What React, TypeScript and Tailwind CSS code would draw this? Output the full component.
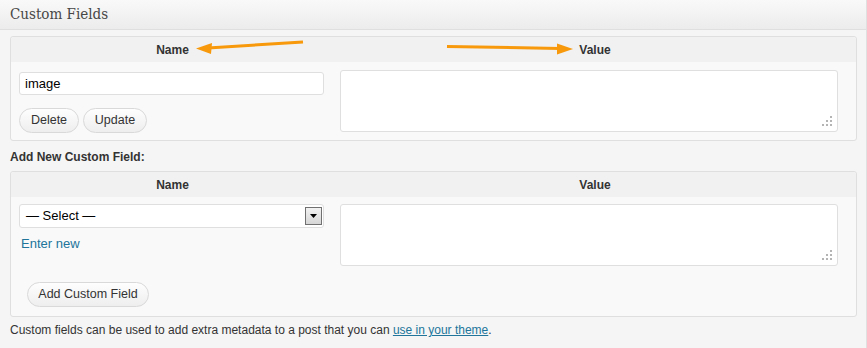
import React from "react";

function Grip() {
  return (
    <svg width="10" height="10" viewBox="0 0 10 10" className="absolute right-[5px] bottom-[5px]">
      <g fill="#b4b4b4">
        <rect x="8" y="0" width="2" height="2" />
        <rect x="4" y="4" width="2" height="2" />
        <rect x="8" y="4" width="2" height="2" />
        <rect x="0" y="8" width="2" height="2" />
        <rect x="4" y="8" width="2" height="2" />
        <rect x="8" y="8" width="2" height="2" />
      </g>
    </svg>
  );
}

function TextArea() {
  return (
    <div className="relative w-[498px] h-[62px] bg-white border border-[#dfdfdf] rounded-[3px]">
      <Grip />
    </div>
  );
}

function Btn({ children, className = "" }: { children: React.ReactNode; className?: string }) {
  return (
    <div
      className={
        "h-[25px] flex items-center justify-center rounded-full border border-[#d9d9d9] bg-gradient-to-b from-[#fefefe] to-[#eeeeee] text-[12.5px] text-[#333] " +
        className
      }
    >
      {children}
    </div>
  );
}

function Head() {
  return (
    <div className="grid grid-cols-[323px_1fr] h-[25px] bg-[#f1f1f1] items-center font-bold text-[12px] text-[#333] rounded-t-[3px]">
      <div className="text-center">Name</div>
      <div className="text-center">Value</div>
    </div>
  );
}

export default function App() {
  return (
    <div
      className="relative w-[867px] h-[348px] bg-[#f5f5f5] border-r border-[#e0e0e0] overflow-hidden"
      style={{ fontFamily: '"Liberation Sans", Arial, sans-serif' }}
    >
      <div className="h-[30px] flex items-center px-[10px] bg-gradient-to-b from-[#f9f9f9] to-[#ececec] border-b border-[#dfdfdf]">
        <span
          className="text-[15px] text-[#464646]"
          style={{ fontFamily: '"DejaVu Serif Condensed", "DejaVu Serif", Georgia, serif', fontSize: "15px" }}
        >
          Custom Fields
        </span>
      </div>

      <div className="px-[10px] pt-[6px]">
        {/* table 1 */}
        <div className="w-[847px] border border-[#dfdfdf] rounded-[3px] bg-[#f9f9f9]">
          <Head />
          <div className="grid grid-cols-[323px_1fr]">
            <div className="pl-[8px] pt-[10px] pb-[7px]">
              <div className="w-[305px] h-[23px] bg-white border border-[#dfdfdf] rounded-[3px] flex items-center px-[5px] text-[13px] text-black">
                image
              </div>
              <div className="flex gap-[4px] mt-[13px]">
                <Btn className="w-[60px]">Delete</Btn>
                <Btn className="w-[64px]">Update</Btn>
              </div>
            </div>
            <div className="pl-[6px] pt-[8px]">
              <TextArea />
            </div>
          </div>
        </div>

        <div className="mt-[9px] h-[14px] flex items-center font-bold text-[12px] text-[#333]">
          Add New Custom Field:
        </div>

        {/* table 2 */}
        <div className="mt-[7px] w-[847px] border border-[#dfdfdf] rounded-[3px] bg-[#f9f9f9]">
          <Head />
          <div className="grid grid-cols-[323px_1fr]">
            <div className="pl-[8px] pt-[7px] pb-[9px]">
              <div className="w-[305px] h-[24px] bg-white border border-[#dfdfdf] rounded-[3px] flex items-center justify-between pl-[6px] pr-[1px] text-[13px] text-black">
                <span>— Select —</span>
                <div className="w-[17px] h-[18px] border border-[#707070] bg-gradient-to-b from-[#f2f2f2] to-[#d6d6d6] flex items-center justify-center">
                  <svg width="7" height="4" viewBox="0 0 7 4">
                    <path d="M0 0H7L3.5 4Z" fill="#000" />
                  </svg>
                </div>
              </div>
              <div className="mt-[8px] h-[16px] flex items-center text-[13px] text-[#21759b] ml-[2px]">Enter new</div>
              <Btn className="w-[122px] mt-[30px] ml-[8px]">Add Custom Field</Btn>
            </div>
            <div className="pl-[6px] pt-[7px]">
              <TextArea />
            </div>
          </div>
        </div>

        <div className="mt-[5px] h-[16px] flex items-center text-[12px] text-[#333]">
          Custom fields can be used to add extra metadata to a post that you can&nbsp;
          <span className="text-[#21759b] underline">use in your theme</span>.
        </div>
      </div>

      {/* annotation arrows */}
      <svg className="absolute left-0 top-0 pointer-events-none" width="867" height="348">
        <g fill="#f7990b" stroke="#f7990b">
          <line x1="303" y1="42" x2="208" y2="48" strokeWidth="3" />
          <path d="M196 48.5 L212 43 L211 54 Z" stroke="none" />
          <line x1="447" y1="46.5" x2="560" y2="48.5" strokeWidth="3" />
          <path d="M573 49 L557 43.5 L557 54.5 Z" stroke="none" />
        </g>
      </svg>
    </div>
  );
}
